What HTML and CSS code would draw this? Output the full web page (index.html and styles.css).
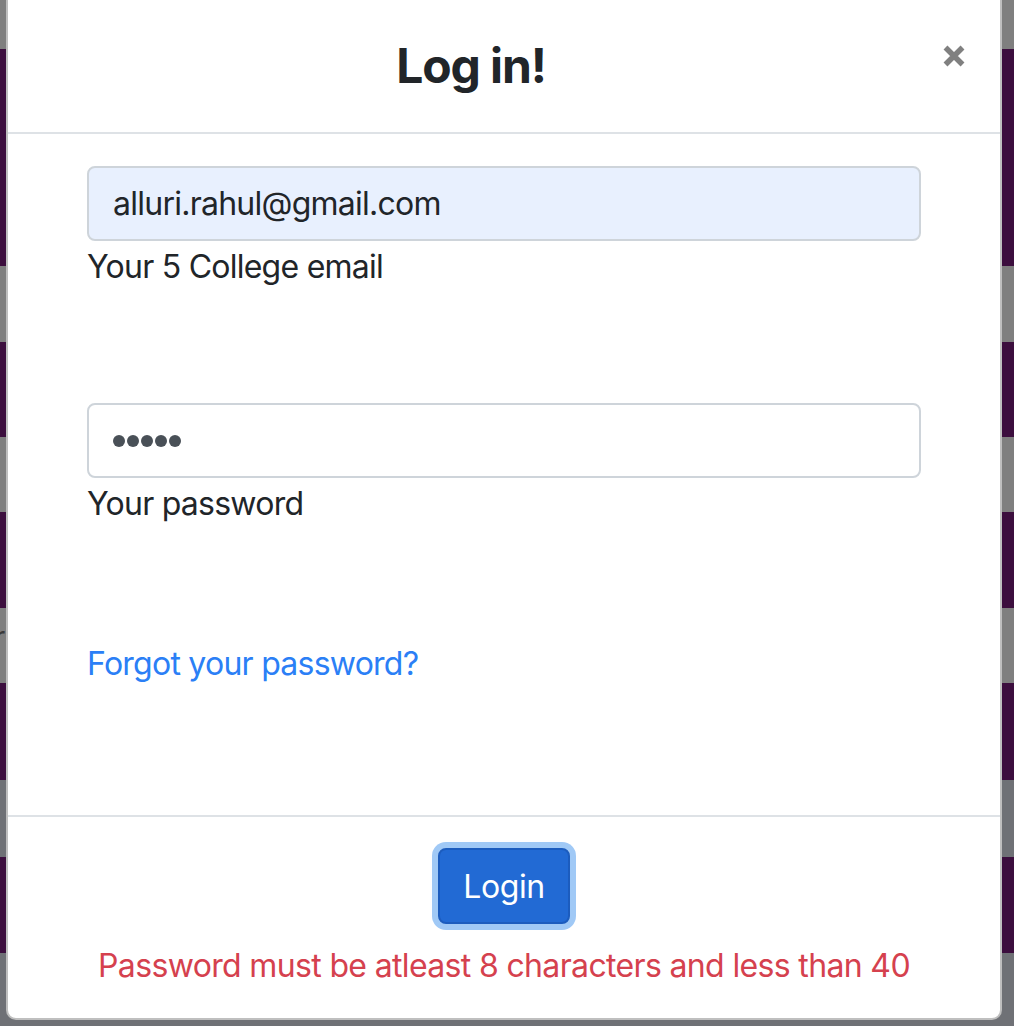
FILE: index.html
```html
<!DOCTYPE html>
<html lang="en">
<head>
<meta charset="utf-8">
<title>Log in!</title>
<link rel="stylesheet" href="styles.css">
</head>
<body>
<div class="backdrop">
  <div class="stripe gray" style="height:49px"></div>
  <div class="stripe purple" style="height:217px"></div>
  <div class="stripe gray" style="height:76px"></div>
  <div class="stripe purple" style="height:95px"></div>
  <div class="stripe gray" style="height:75px"></div>
  <div class="stripe purple" style="height:96px"></div>
  <div class="stripe gray" style="height:75px"><span class="frag">r</span></div>
  <div class="stripe purple" style="height:97px"></div>
  <div class="stripe slate" style="height:77px"></div>
  <div class="stripe purple" style="height:96px"></div>
  <div class="stripe slate" style="height:73px"></div>
</div>

<div class="modal">
  <div class="modal-header">
    <h4 class="modal-title">Log in!</h4>
    <button class="close" type="button" aria-label="Close">
      <svg width="24" height="24" viewBox="0 0 24 24"><path d="M3.5 3.5 L20.5 20.5 M20.5 3.5 L3.5 20.5" stroke="#808080" stroke-width="5.5" fill="none"/></svg>
    </button>
  </div>
  <div class="modal-body">
    <div class="form-group">
      <input class="form-control autofill" type="email" value="alluri.rahul@gmail.com">
      <div class="help">Your 5 College email</div>
    </div>
    <div class="form-group">
      <div class="form-control pw">
        <span class="dot"></span><span class="dot"></span><span class="dot"></span><span class="dot"></span><span class="dot"></span>
      </div>
      <div class="help">Your password</div>
    </div>
    <a class="forgot" href="#">Forgot your password?</a>
  </div>
  <div class="modal-footer">
    <button class="btn-login" type="button">Login</button>
    <div class="error">Password must be atleast 8 characters and less than 40</div>
  </div>
</div>
</body>
</html>
```

FILE: styles.css
```css
html, body {
  margin: 0;
  padding: 0;
}
body {
  width: 1014px;
  height: 1026px;
  overflow: hidden;
  position: relative;
  font-family: Inter, "Liberation Sans", sans-serif;
  color: #212529;
}
.backdrop {
  display: flex;
  flex-direction: column;
  height: 1026px;
}
.stripe {
  flex: none;
  position: relative;
}
.gray { background: #7f7f7f; }
.purple { background: #3c0e3e; }
.slate { background: #6f7176; }
.frag {
  position: absolute;
  left: -6px;
  top: 14px;
  font-size: 30px;
  line-height: 30px;
  color: #3a3a3a;
}

.modal {
  position: absolute;
  left: 6px;
  top: -10px;
  width: 996px;
  height: 1030px;
  box-sizing: border-box;
  background: #fff;
  border: 2px solid rgba(0, 0, 0, 0.25);
  border-radius: 10px;
  display: flex;
  flex-direction: column;
}

.modal-header {
  display: flex;
  align-items: flex-start;
  padding: 38px 34px 30px 32px;
  border-bottom: 2px solid #dee2e6;
}
.modal-title {
  flex: 1;
  margin: 0;
  text-align: center;
  font-size: 48px;
  line-height: 72px;
  font-weight: 700;
  letter-spacing: -1.1px;
  color: #212529;
}
.close {
  margin: 14px 0 0 40px;
  padding: 0;
  border: 0;
  background: none;
  width: 24px;
  height: 24px;
  display: block;
}
.close svg { display: block; }

.modal-body {
  padding: 32px 79px 32px 79px;
  display: flex;
  flex-direction: column;
}
.form-group {
  margin-bottom: 112px;
}
.form-control {
  display: block;
  width: 100%;
  height: 75px;
  box-sizing: border-box;
  padding: 0 24px;
  border: 2px solid #ced4da;
  border-radius: 8px;
  font-family: Inter, "Liberation Sans", sans-serif;
  font-size: 32px;
  letter-spacing: -0.75px;
  color: #212529;
  background: #fff;
  outline: none;
}
.autofill {
  background: #e8f0fe;
}
.pw {
  display: flex;
  align-items: center;
  gap: 2px;
}
.dot {
  width: 12px;
  height: 12px;
  border-radius: 50%;
  background: #495057;
}
.help {
  font-size: 32px;
  line-height: 48px;
  letter-spacing: -0.75px;
  color: #212529;
  padding-top: 2px;
}
.forgot {
  font-size: 32px;
  line-height: 48px;
  letter-spacing: -0.75px;
  color: #2b7ff6;
  text-decoration: none;
  margin-bottom: 95px;
  align-self: flex-start;
}

.modal-footer {
  border-top: 2px solid #dee2e6;
  padding: 31px 24px 25px;
  display: flex;
  flex-direction: column;
  align-items: center;
}
.btn-login {
  height: 76px;
  width: 132px;
  box-sizing: border-box;
  padding: 0;
  font-family: Inter, "Liberation Sans", sans-serif;
  font-size: 32px;
  letter-spacing: -0.4px;
  color: #fff;
  background: #226ad4;
  border: 2px solid #1c5cbe;
  border-radius: 8px;
  box-shadow: 0 0 0 6px #a0c9f6;
}
.error {
  margin-top: 18px;
  font-size: 32px;
  line-height: 48px;
  letter-spacing: -0.65px;
  color: #d5414e;
}
```
